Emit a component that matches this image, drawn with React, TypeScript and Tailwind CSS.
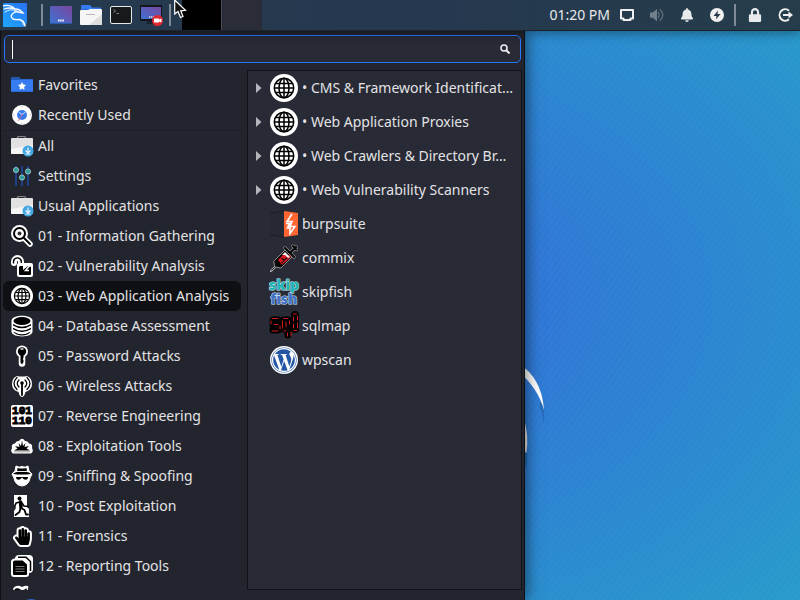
import React from "react";
import { FaBell, FaHandPaper, FaLock, FaStar, FaWordpress } from "react-icons/fa";

interface IconProps {
  className?: string;
}

interface MenuEntry {
  label: string;
  icon: React.ComponentType<IconProps>;
}

/* ---------- panel icons ---------- */

function KaliLogo() {
  return (
    <svg viewBox="0 0 24 24" className="size-6">
      <defs>
        <linearGradient id="kali" x1="0" y1="1" x2="1" y2="0">
          <stop offset="0" stopColor="#1fa8ff" />
          <stop offset="1" stopColor="#2a72f0" />
        </linearGradient>
      </defs>
      <path d="M0 1Q0 0 1 0H23Q24 0 24 1V18Q24 24 18 24H1Q0 24 0 23Z" fill="url(#kali)" />
      <g fill="none" stroke="#fff" strokeLinecap="round">
        <path d="M0 3Q7 1 12 6Q7 4 1 6" strokeWidth="1.3" />
        <path d="M2 9Q7 5 14 8" strokeWidth="0.9" />
        <path d="M12 6Q17 6 20 10L17.500 9.500Q13 8 11 9.500Q6 13 10 16Q12 17 16 16.500Q21 17 22 23" strokeWidth="1.4" />
        <path d="M17 17Q21 19 20.500 22" strokeWidth="0.7" />
      </g>
    </svg>
  );
}

function DesktopIcon() {
  return (
    <svg viewBox="0 0 22 22" className="size-[22px]">
      <defs>
        <linearGradient id="desk" x1="0" y1="1" x2="1" y2="0">
          <stop offset="0" stopColor="#3b73d2" />
          <stop offset="1" stopColor="#7b479f" />
        </linearGradient>
      </defs>
      <rect y="2" width="22" height="18" rx="1" fill="url(#desk)" />
      <path d="M0 19.500H22" stroke="#275ba7" />
      <path d="M8 16.500H14" stroke="#fff" strokeWidth="2" strokeDasharray="1.500 0.700" />
    </svg>
  );
}

function FilesIcon() {
  return (
    <svg viewBox="0 0 22 22" className="size-[22px]">
      <path d="M1 7V2Q1 1 2 1H10L12 3.500H20Q21 3.500 21 4.500V8Z" fill="#367bf0" />
      <path d="M2 5H20V8H2Z" fill="#2467d5" />
      <path d="M0 7Q0 6 1 6H8L10 5H21Q22 5 22 6V20Q22 21 21 21H1Q0 21 0 20Z" fill="#f6f6f6" />
      <path d="M22 10V20Q22 21 21 21H9Z" fill="#dededf" />
      <path d="M6 10.500H15" stroke="#b8b8bd" />
    </svg>
  );
}

function TerminalIcon() {
  return (
    <svg viewBox="0 0 22 22" className="size-[22px]">
      <rect x="0.500" y="2.500" width="21" height="17" rx="1.500" fill="#171a1c" stroke="#e9e9e9" />
      <path d="M3.500 5.500L5.500 7L3.500 8.500M6.500 9.500H9" fill="none" stroke="#999" strokeWidth="0.800" />
    </svg>
  );
}

function RecorderIcon() {
  return (
    <svg viewBox="0 0 24 22" className="h-[22px] w-6">
      <path d="M6 20L8 16H15L17 20Z" fill="#172331" />
      <rect x="0" y="1" width="22" height="16" fill="#15161d" />
      <rect x="1" y="3" width="20" height="12" fill="url(#desk)" />
      <path d="M9 13H14" stroke="#ddd" strokeWidth="1.500" strokeDasharray="1.300 0.600" />
      <circle cx="17.500" cy="16.500" r="5.500" fill="#e0262e" />
      <path d="M14 14.500H19V15.500L21.500 14.500V18.500L19 17.500V18.500H14Z" fill="#fff" />
    </svg>
  );
}

function ScreenIcon() {
  return (
    <svg viewBox="0 0 14 12" className="h-3 w-3.5" fill="none" stroke="#f0f0f0" strokeWidth="2">
      <path d="M1 1H13V9.500H10.500V11H3.500V9.500H1Z" strokeLinejoin="round" />
    </svg>
  );
}

function VolumeIcon() {
  return (
    <svg viewBox="0 0 16 16" className="h-4 w-3.5 overflow-visible">
      <path d="M0 5H3L8 1V15L3 11H0Z" fill="#71808c" />
      <path d="M9 4.500Q12 8 9 11.500M11 1.500Q18.500 8 11 14.500" fill="none" stroke="#596b79" strokeWidth="1.600" />
    </svg>
  );
}

function PowerIcon() {
  return (
    <svg viewBox="0 0 14 14" className="size-3.5">
      <circle cx="7" cy="7" r="7" fill="#f0f0f0" />
      <path d="M8 2.500L3.500 8H6.500L6 11.500L10.500 6H7.500Z" fill="#26394c" />
    </svg>
  );
}

function LogoutIcon() {
  return (
    <svg viewBox="0 0 15 14" className="h-3.5 w-[15px]" fill="none" stroke="#f0f0f0" strokeWidth="2">
      <path d="M11 2.700A5.700 5.700 0 1 0 11 11.300" />
      <path d="M5 7H12" />
      <path d="M10.500 3.500L15 7L10.500 10.500Z" fill="#f0f0f0" stroke="none" />
    </svg>
  );
}

function PanelSeparator() {
  return <span className="h-[22px] w-0.5 shrink-0 bg-[#7e8b97]" />;
}

/* ---------- category icons ---------- */

function FavoritesIcon({ className }: IconProps) {
  return (
    <span className={`${className} relative flex items-center justify-center`}>
      <svg viewBox="0 0 22 22" className="absolute inset-0">
        <path d="M0 4Q0 3 1 3H8L10 5H21Q22 5 22 6V17Q22 18 21 18H1Q0 18 0 17Z" fill="#2358b5" />
        <path d="M0 6H8L10 5.500H22V17.500H0Z" fill="#367bf0" />
      </svg>
      <FaStar className="relative mt-px size-2 text-white" />
    </span>
  );
}

function RecentIcon({ className }: IconProps) {
  return (
    <svg viewBox="0 0 22 22" className={className}>
      <circle cx="11" cy="11" r="10" fill="#fff" />
      <circle cx="11" cy="11" r="5" fill="#367bf0" />
      <path d="M7.500 8L11 10.500L14.500 8" fill="none" stroke="#dfeaff" strokeWidth="0.900" />
      <path d="M7 17L12 10" stroke="#e1686f" strokeWidth="0.900" />
      <g stroke="#aaa" strokeWidth="0.700">
        <path d="M11 2V3.500M11 18.500V20M2 11H3.500M18.500 11H20" />
      </g>
    </svg>
  );
}

function BriefcaseIcon({ className }: IconProps) {
  return (
    <svg viewBox="0 0 22 22" className={className} overflow="visible">
      <path d="M6.500 4V2.500Q6.500 1.500 7.500 1.500H13.500Q14.500 1.500 14.500 2.500V4" fill="none" stroke="#85868a" strokeWidth="1.200" />
      <path d="M0 4Q0 3 1 3H21Q22 3 22 4V18Q22 19 21 19H1Q0 19 0 18Z" fill="#e2e2e2" />
      <path d="M0 14L22 10V18Q22 19 21 19H1Q0 19 0 18Z" fill="#f6f6f6" />
      <circle cx="17" cy="16" r="5.500" fill="#42a6e4" />
      <path d="M17 12.500V17M14.500 15.500L17 18L19.500 15.500M14.500 19H19.500" fill="none" stroke="#e9f5fc" strokeWidth="1.200" />
    </svg>
  );
}

function SlidersIcon({ className }: IconProps) {
  return (
    <svg viewBox="0 0 22 22" className={className}>
      <path d="M5 1V21M11 1V21M17 1V21" stroke="#1d4287" strokeWidth="2" />
      <g fill="#2a9d98" stroke="#c7d9db" strokeWidth="0.700">
        <circle cx="5" cy="5" r="2.600" />
        <circle cx="11" cy="12.500" r="2.600" />
        <circle cx="17" cy="6.500" r="2.600" />
      </g>
    </svg>
  );
}

function MagnifierIcon({ className }: IconProps) {
  return (
    <svg viewBox="0 0 22 22" className={className}>
      <path d="M13 13L19 19" stroke="#fff" strokeWidth="5.500" strokeLinecap="round" />
      <circle cx="8.500" cy="8.500" r="8.500" fill="#fff" />
      <circle cx="8.500" cy="8.500" r="5.500" fill="#fff" stroke="#000" strokeWidth="2" />
      <path d="M13 13L19 19" stroke="#000" strokeWidth="1.800" strokeLinecap="round" />
      <circle cx="8.500" cy="8.500" r="2" fill="#333" />
    </svg>
  );
}

function UnlockIcon({ className }: IconProps) {
  return (
    <svg viewBox="0 0 22 22" className={className}>
      <path d="M3 8V6.500A3.500 3.500 0 0 1 10 6.500V10" fill="none" stroke="#fff" strokeWidth="6" strokeLinecap="round" />
      <path d="M2.500 8.500V6A4 4 0 0 1 10.300 6V9" fill="none" stroke="#000" strokeWidth="1.400" />
      <rect x="6" y="8" width="16" height="14" rx="2" fill="#fff" />
      <path d="M8 12L9 11H12V15L17 11H18L20 12V19Q20 20 19 20H9Q8 20 8 19Z" fill="#000" />
      <path d="M20 9L14.500 15.500H18" fill="none" stroke="#fff" strokeWidth="1.500" />
    </svg>
  );
}

function GlobeIcon({ className }: IconProps) {
  return (
    <svg viewBox="0 0 28 28" className={className}>
      <circle cx="14" cy="14" r="14" fill="#fff" />
      <g fill="none" stroke="#000" strokeWidth="1.500">
        <circle cx="14" cy="14" r="9.700" />
        <ellipse cx="14" cy="14" rx="5" ry="9.700" />
        <path d="M14 4V24M4 14H24M6 9.500H22M6 18.500H22" />
      </g>
    </svg>
  );
}

function DatabaseIcon({ className }: IconProps) {
  return (
    <svg viewBox="0 0 22 22" className={className}>
      <path d="M0.500 5.500C0.500 -1 21.500 -1 21.500 5.500V16.500C21.500 23 0.500 23 0.500 16.500Z" fill="#fff" />
      <ellipse cx="11" cy="6" rx="8.500" ry="4" fill="#000" />
      <path
        d="M2 9Q11 14.500 20 9V10.500Q11 16 2 10.500ZM2 12.800Q11 18.300 20 12.800V14.300Q11 19.800 2 14.300ZM2 16.600Q11 22 20 16.600Q17 20.500 11 20.500Q5 20.500 2 16.600Z"
        fill="#000"
      />
    </svg>
  );
}

function KeyIcon({ className }: IconProps) {
  return (
    <svg viewBox="0 0 22 22" className={className}>
      <path d="M11 6.500V18.500" stroke="#fff" strokeWidth="6.500" strokeLinecap="round" />
      <circle cx="11" cy="6.500" r="6" fill="#fff" />
      <circle cx="11" cy="6.500" r="4.200" fill="#000" />
      <path d="M9.500 9H12.500V13L11.700 14L12.500 15V17L11 19.500L9.500 17.500Z" fill="#000" />
      <path d="M10 4H12" stroke="#ddd" strokeWidth="1.500" strokeLinecap="round" />
    </svg>
  );
}

function AntennaIcon({ className }: IconProps) {
  return (
    <svg viewBox="0 0 22 22" className={className}>
      <path d="M6 1Q1 3 1 9Q1 15 7.500 17L8.500 20Q11 24 13.500 20L14.500 17Q21 15 21 9Q21 3 16 1Q11 2 6 1Z" fill="#fff" />
      <g fill="none" stroke="#000" strokeLinecap="round">
        <path d="M6 2.500Q0 8.500 6 14.500M16 2.500Q22 8.500 16 14.500" strokeWidth="1.200" />
        <path d="M8 5Q4.500 8.500 8 12M14 5Q17.500 8.500 14 12" strokeWidth="1.200" />
        <path d="M11 9V20" strokeWidth="1.800" />
      </g>
      <circle cx="11" cy="8" r="1.800" fill="#000" />
    </svg>
  );
}

function BinaryIcon({ className }: IconProps) {
  return (
    <span className={`${className} flex flex-col items-center justify-center rounded-xs bg-white font-['Liberation_Mono',monospace] text-[11px] leading-[10px] font-black text-black [-webkit-text-stroke:1px_#000]`}>
      <span>101</span>
      <span>110</span>
    </span>
  );
}

function BlastIcon({ className }: IconProps) {
  return (
    <svg viewBox="0 0 22 22" className={className}>
      <path
        d="M2 18.500Q-1 17 1 13Q0 9 4 8.500Q5 5.500 8 6Q11 1.500 14 6Q17 5.500 18 8.500Q22 9 21 13Q23 17 20 18.500Z"
        fill="#fff"
      />
      <path
        d="M3 15.500L6.500 13.500L4 11L8.500 12L7.500 8L10 11L11 5.500L12 11L14.500 8L13.500 12L18 11L15.500 13.500L19 15.500Z"
        fill="#000"
      />
      <path d="M3 16.800H19" stroke="#888" strokeWidth="0.800" />
    </svg>
  );
}

function SpyIcon({ className }: IconProps) {
  return (
    <svg viewBox="0 0 22 22" className={className}>
      <path
        d="M5 1Q8 3 11 1.500Q14 3 17 1L18 6L21 9L20 11L19 13Q18 20 11 21Q4 20 3 13L2 11L1 9L4 6Z"
        fill="#fff"
        stroke="#fff"
        strokeLinejoin="round"
      />
      <path d="M6.500 3Q11 4 15.500 3L16 7Q19 7.500 20 9Q11 10 2 9Q3 7.500 6 7Z" fill="#000" />
      <path d="M6 6.500H16" stroke="#fff" strokeWidth="0.900" />
      <path d="M5 12H17L16.500 14Q14.500 15.500 12.500 14L11 12.500L9.500 14Q7.500 15.500 5.500 14Z" fill="#000" />
    </svg>
  );
}

function EscapeIcon({ className }: IconProps) {
  return (
    <svg viewBox="0 0 22 22" className={className}>
      <path d="M3 0H16V12L18 14V22H3V16L5 13L3 9Z" fill="#fff" />
      <circle cx="8.500" cy="3.500" r="2" fill="#000" />
      <g fill="none" stroke="#000" strokeLinejoin="round" strokeLinecap="round">
        <path d="M9.500 7L10 12" strokeWidth="3.500" />
        <path d="M9 7L5 8L4 11M11 8L13 11L17 11.500" strokeWidth="1.500" />
        <path d="M10 13L13.500 15L15 19.500H17" strokeWidth="1.800" />
        <path d="M9.500 13L8.500 17L4.500 20" strokeWidth="1.800" />
      </g>
    </svg>
  );
}

function HandIcon({ className }: IconProps) {
  return (
    <span className={`${className} flex items-center justify-center`}>
      <FaHandPaper className="size-[17px] overflow-visible text-black" stroke="#fff" strokeWidth="120" strokeLinejoin="round" paintOrder="stroke" />
    </span>
  );
}

function ReportIcon({ className }: IconProps) {
  return (
    <svg viewBox="0 0 22 22" className={className}>
      <rect x="4" y="0" width="18" height="18" rx="4" fill="#fff" />
      <path d="M7 2.200H15L19.500 6.500V16" fill="none" stroke="#000" strokeWidth="1.500" />
      <path d="M4 4.500H12L17 9V19Q17 21 15 21H3Q1 21 1 19V7Q1 4.500 4 4.500Z" fill="#000" stroke="#fff" strokeWidth="2" />
      <path d="M4.500 11.500H13.500M4.500 14H13.500M4.500 16.500H13.500" stroke="#777" />
    </svg>
  );
}

function SocialIcon({ className }: IconProps) {
  return (
    <svg viewBox="0 0 22 22" className={className}>
      <path d="M2 4Q4 0 9 1L11 2Q15 0 17.500 1.500L16 8H4Z" fill="#fff" />
      <path d="M3.500 4.500Q6 2 9.500 4.500Q13 6 15.500 3L16 10H4Z" fill="#000" />
    </svg>
  );
}

/* ---------- application icons ---------- */

function BurpIcon({ className }: IconProps) {
  return (
    <svg viewBox="0 0 28 28" className={className}>
      <path d="M0 3L14 1V27L0 25Z" fill="#262833" />
      <path d="M0 3L14 1M0 25L14 27" stroke="#1b1c24" />
      <path d="M14 1L28 3V25L14 27Z" fill="#ff6633" />
      <path d="M22 4L17 11.500H22L20 16.500H25L20 23.500V18H17.500L19.500 13.500H16" fill="none" stroke="#fff" strokeWidth="1.600" />
    </svg>
  );
}

function SyringeIcon({ className }: IconProps) {
  return (
    <svg viewBox="0 0 28 28" className={className}>
      <g strokeLinecap="round" strokeLinejoin="round">
        <path d="M1 27L7 21" stroke="#bbb" strokeWidth="2" />
        <path d="M1.500 26.500L6 22" stroke="#080808" strokeWidth="0.800" />
        <path d="M4 17L15 6L22 13L11 24L5 23Z" fill="#080808" stroke="#aaa" strokeWidth="0.800" />
        <path d="M20 9L26 3M15 4L24 13M23 2L26.500 5.500" stroke="#999" strokeWidth="3.200" />
        <path d="M20 9L26 3M15 4L24 13M23 2L26.500 5.500" stroke="#080808" strokeWidth="2.200" />
        <path d="M8 16L13 11H19L21 13L12 21Z" fill="#df1720" />
        <path d="M12 11L15 8L20 13L18 14L15 11Z" fill="#f5f5f5" />
        <path d="M12 14.500L14 16L17 14M12 19L14 16" fill="none" stroke="#111" strokeWidth="1.200" />
      </g>
    </svg>
  );
}

function SkipfishIcon({ className }: IconProps) {
  return (
    <span className={`${className} flex flex-col items-center font-['Open_Sans',sans-serif] text-sm leading-3.5 font-extrabold [-webkit-text-stroke:1px_#d5eaf0] [paint-order:stroke]`}>
      <span className="text-[#20b4b8]">skip</span>
      <span className="text-[#4572c4]">fish</span>
    </span>
  );
}

function SqlmapIcon({ className }: IconProps) {
  return (
    <svg viewBox="0 0 28 28" className={className} overflow="visible">
      <g fill="none" stroke="#000" strokeLinejoin="round" strokeLinecap="round">
        <path d="M8 8H3V13H8V18H3" strokeWidth="7" />
        <path d="M18 8H14V17H18V8V23" strokeWidth="7" />
        <path d="M25 3V17" strokeWidth="8" />
      </g>
      <g fill="none" stroke="#d01c1c" strokeLinecap="round">
        <path d="M2 6.500H8M1 9V12M4 12.500H8M10 14V17M2 19H8" />
        <path d="M13.500 6.500H18M12.500 9V16M16 10V15M19.500 9V12M14 19H16M17.500 21V24M21 20V24" />
        <path d="M23.500 2H26.500M23.500 5V9M23.500 12V16M27.500 4V8M27.500 11V16M24 18.500H26.500" />
      </g>
    </svg>
  );
}

function WpscanIcon({ className }: IconProps) {
  return (
    <span className={`${className} flex items-center justify-center rounded-full bg-white`}>
      <FaWordpress className="size-[26px] text-[#2457a6]" />
    </span>
  );
}

/* ---------- data ---------- */

const shortcuts: MenuEntry[] = [
  { label: "Favorites", icon: FavoritesIcon },
  { label: "Recently Used", icon: RecentIcon },
];

const categories: MenuEntry[] = [
  { label: "All", icon: BriefcaseIcon },
  { label: "Settings", icon: SlidersIcon },
  { label: "Usual Applications", icon: BriefcaseIcon },
  { label: "01 - Information Gathering", icon: MagnifierIcon },
  { label: "02 - Vulnerability Analysis", icon: UnlockIcon },
  { label: "03 - Web Application Analysis", icon: GlobeIcon },
  { label: "04 - Database Assessment", icon: DatabaseIcon },
  { label: "05 - Password Attacks", icon: KeyIcon },
  { label: "06 - Wireless Attacks", icon: AntennaIcon },
  { label: "07 - Reverse Engineering", icon: BinaryIcon },
  { label: "08 - Exploitation Tools", icon: BlastIcon },
  { label: "09 - Sniffing & Spoofing", icon: SpyIcon },
  { label: "10 - Post Exploitation", icon: EscapeIcon },
  { label: "11 - Forensics", icon: HandIcon },
  { label: "12 - Reporting Tools", icon: ReportIcon },
];

const groups = [
  "CMS & Framework Identificat…",
  "Web Application Proxies",
  "Web Crawlers & Directory Br…",
  "Web Vulnerability Scanners",
];

const apps: MenuEntry[] = [
  { label: "burpsuite", icon: BurpIcon },
  { label: "commix", icon: SyringeIcon },
  { label: "skipfish", icon: SkipfishIcon },
  { label: "sqlmap", icon: SqlmapIcon },
  { label: "wpscan", icon: WpscanIcon },
];

/* ---------- layout ---------- */

function CategoryButton({ entry, active }: { entry: MenuEntry; active: boolean }) {
  const Icon = entry.icon;
  return (
    <button
      className={`flex h-[30px] w-full shrink-0 items-center gap-[5px] rounded-md pl-2 text-left whitespace-nowrap ${
        active ? "bg-[#0f1014]" : ""
      }`}
    >
      <Icon className="size-[22px] shrink-0" />
      {entry.label}
    </button>
  );
}

function TopPanel() {
  return (
    <header className="flex h-[31px] shrink-0 items-center justify-between border-b border-[#1d232b] bg-linear-to-r from-[#253b4d] via-[#263850] to-[#253d4b]">
      <div className="flex h-full items-center pl-[3px]">
        <button aria-label="Applications" className="mr-3.5">
          <KaliLogo />
        </button>
        <PanelSeparator />
        <div className="flex items-center gap-2 pr-[5px] pl-[7px]">
          <button aria-label="Show desktop"><DesktopIcon /></button>
          <button aria-label="File manager"><FilesIcon /></button>
          <button aria-label="Terminal"><TerminalIcon /></button>
          <button aria-label="Screen recorder"><RecorderIcon /></button>
        </div>
        <PanelSeparator />
        <div className="ml-[11px] flex h-full">
          <span className="w-10 border-r border-[#4b4c55] bg-black" />
          <span className="w-10 bg-[#2a2c38]" />
        </div>
      </div>
      <div className="flex items-center pr-[7px] text-[#e8eaec]">
        <span className="mr-2.5">01:20 PM</span>
        <div className="flex items-center gap-4">
          <button aria-label="Display"><ScreenIcon /></button>
          <button aria-label="Volume"><VolumeIcon /></button>
          <button aria-label="Notifications"><FaBell className="size-3.5" /></button>
          <button aria-label="Power"><PowerIcon /></button>
        </div>
        <div className="ml-2.5 flex items-center">
          <PanelSeparator />
          <button aria-label="Lock screen" className="mr-4 ml-3"><FaLock className="size-3.5" /></button>
          <button aria-label="Log out"><LogoutIcon /></button>
        </div>
      </div>
    </header>
  );
}

export default function App() {
  return (
    <div className="relative flex h-screen flex-col overflow-hidden bg-[radial-gradient(ellipse_farthest-corner_at_center,#2f70d6_0%,#2f7ad6_30%,#2b89d0_64%,#289bcb_100%)] font-['Noto_Sans',sans-serif] text-sm text-[#e3e3e5]">
      {/* wallpaper */}
      <div className="absolute inset-0 bg-[repeating-linear-gradient(125deg,transparent_0_3px,rgba(255,255,255,0.02)_3px_5px)]" />
      <svg viewBox="0 0 800 600" className="absolute inset-0 size-full" preserveAspectRatio="xMidYMid slice">
        <path d="M543.500 398Q544 415 544 424Q541 410 539 404Z" fill="#1d5b9f" opacity="0.500" />
        <path d="M518 363Q542 378 544 410Q538 388 518 371Z" fill="#fff" />
        <path d="M524 420Q528 435 527 470L523 460Z" fill="#1d5b9f" opacity="0.500" />
        <path d="M524 420Q529 434 526.500 453L523 450Z" fill="#e9e4e6" />
      </svg>

      <div className="relative z-10 shadow-[0_2px_12px_rgba(0,0,0,0.4)]">
        <TopPanel />
      </div>

      <nav className="relative flex min-h-0 w-[525px] max-w-full flex-1 flex-col border-x border-[#0e1014] bg-[#23252e] px-0.5 pt-1 shadow-[2px_0_14px_rgba(0,0,0,0.5)]">
        <div className="mx-px flex h-7 shrink-0 items-center rounded-[5px] border border-[#2777ff] bg-[#282a36] pr-2.5 pl-[7px]">
          <span className="h-[19px] w-px bg-white" />
          <input type="search" aria-label="Search applications" className="h-full min-w-0 flex-1 px-1 outline-none" />
          <svg viewBox="0 0 10 10" className="size-2.5" fill="none" stroke="#f0f0f0" strokeWidth="1.500">
            <circle cx="4" cy="4" r="3" />
            <path d="M6 6L9.500 9.500" strokeWidth="2" />
          </svg>
        </div>

        <div className="mt-[7px] flex min-h-0 flex-1 gap-1.5">
          <div className="flex w-[238px] shrink-0 flex-col overflow-hidden">
            {shortcuts.map((entry) => (
              <CategoryButton key={entry.label} entry={entry} active={false} />
            ))}
            <hr className="border-[#1d1f27]" />
            {categories.map((entry) => (
              <CategoryButton key={entry.label} entry={entry} active={entry.icon === GlobeIcon} />
            ))}
            <div className="flex pt-1 pl-2">
              <SocialIcon className="size-[22px] shrink-0" />
            </div>
          </div>

          <div className="min-w-0 flex-1 border border-[#121319] bg-[#282a36]">
            {groups.map((label) => (
              <button key={label} aria-expanded="false" className="flex h-[34px] w-full items-center pl-2 text-left whitespace-nowrap">
                <svg viewBox="0 0 6 10" className="mr-2 h-2.5 w-1.5 shrink-0">
                  <path d="M0 0L5.500 5L0 10Z" fill="#b4b5bb" />
                </svg>
                <GlobeIcon className="mr-1 size-7 shrink-0" />
                • {label}
              </button>
            ))}
            {apps.map(({ label, icon: Icon }) => (
              <button key={label} className="flex h-[34px] w-full items-center gap-1 pl-[22px] text-left">
                <Icon className="size-7 shrink-0" />
                {label}
              </button>
            ))}
          </div>
        </div>

        <footer className="h-2.5 shrink-0 overflow-hidden pt-[9px] pl-4">
          <div className="size-6 rounded-full bg-[#2a62c4]" />
        </footer>
      </nav>

      {/* pointer */}
      <svg viewBox="0 0 13 20" className="absolute top-0 left-[174px] z-20 h-5 w-[13px]">
        <path d="M0.700 0L0.700 14L4 11.500L6.500 17.500L9 16.500L6.700 10.800L11.500 10.300Z" fill="#111" stroke="#fff" strokeWidth="1.200" />
      </svg>
    </div>
  );
}
